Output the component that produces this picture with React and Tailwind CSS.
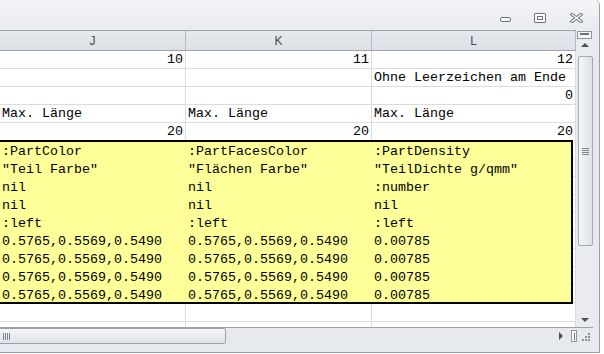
import React from 'react';

// column widths (incl. right gridline)
const COLS = ['w-[186px]', 'w-[186px]', 'w-[204px]'];

const topRows = [
  [{ t: '10', r: true }, { t: '11', r: true }, { t: '12', r: true }],
  [null, null, { t: 'Ohne Leerzeichen am Ende' }],
  [null, null, { t: '0', r: true }],
  [{ t: 'Max. Länge' }, { t: 'Max. Länge' }, { t: 'Max. Länge' }],
  [{ t: '20', r: true }, { t: '20', r: true }, { t: '20', r: true }],
];

const nums = '0.5765,0.5569,0.5490';
const yellowRows = [
  [':PartColor', ':PartFacesColor', ':PartDensity'],
  ['"Teil Farbe"', '"Flächen Farbe"', '"TeilDichte g/qmm"'],
  ['nil', 'nil', ':number'],
  ['nil', 'nil', 'nil'],
  [':left', ':left', ':left'],
  [nums, nums, '0.00785'],
  [nums, nums, '0.00785'],
  [nums, nums, '0.00785'],
  [nums, nums, '0.00785'],
];

const Cell = ({ cell, w }) => (
  <div
    className={`${w} h-full shrink-0 border-r border-[#dadcdd] flex items-center px-[2px] pt-[1px] whitespace-nowrap overflow-hidden ${
      cell && cell.r ? 'justify-end' : ''
    }`}
  >
    {cell ? cell.t : ''}
  </div>
);

const GridRow = ({ cells, h = 'h-[18px]', last = false }) => (
  <div className={`flex ${h} ${last ? '' : 'border-b'} border-[#dadcdd]`}>
    {COLS.map((w, i) => (
      <Cell key={i} cell={cells[i]} w={w} />
    ))}
  </div>
);

const WindowButtons = () => (
  <div className="flex items-start pt-[13px] pr-[16px] ml-auto">
    {/* minimize */}
    <div className="mt-[4px] w-[11px] h-[5px] rounded-[2px] border border-[#6f747b] bg-[#fbfbfc]" />
    {/* restore */}
    <div className="ml-[23px] w-[12px] h-[10px] rounded-[1px] border border-[#6f747b] bg-[#fbfbfc] flex items-center justify-center">
      <div className="w-[6px] h-[4px] border border-[#6f747b]" />
    </div>
    {/* close */}
    <svg className="ml-[24px]" width="13" height="10" viewBox="0 0 13 10">
      <path d="M2 1.5 L11 8.5 M11 1.5 L2 8.5" stroke="#70757c" strokeWidth="3.4" strokeLinecap="square" />
      <path d="M2 1.5 L11 8.5 M11 1.5 L2 8.5" stroke="#fbfbfc" strokeWidth="1.4" strokeLinecap="square" />
    </svg>
  </div>
);

const VScroll = () => (
  <div className="w-[17px] h-full bg-[#e9ebee] flex flex-col items-center">
    <div className="mt-[1px] w-[15px] h-[8px] border border-[#8f959d] bg-[#f6f7f9] flex justify-center pt-[1px]">
      <div className="w-[9px] h-[2px] border-y border-[#6f747b]" />
    </div>
    <div className="h-[12px] flex items-center justify-center">
      <div className="w-0 h-0 border-x-[4px] border-x-transparent border-b-[4px] border-b-[#4b5058]" />
    </div>
    <div className="mt-[5px] ml-[2px] w-[15px] h-[190px] rounded-[2px] border border-[#a3a9b1] bg-gradient-to-r from-[#f5f6f8] to-[#dde1e6] flex items-center justify-center">
      <div className="flex flex-col gap-[1px]">
        <div className="w-[7px] h-px bg-[#7d838a]" />
        <div className="w-[7px] h-px bg-[#7d838a]" />
        <div className="w-[7px] h-px bg-[#7d838a]" />
        <div className="w-[7px] h-px bg-[#7d838a]" />
      </div>
    </div>
    <div className="flex-1" />
    <div className="h-[14px] flex items-center justify-center">
      <div className="w-0 h-0 border-x-[4px] border-x-transparent border-t-[4px] border-t-[#4b5058]" />
    </div>
  </div>
);

const HScroll = () => (
  <div className="flex h-[16px]">
    <div className="w-[571px] h-full bg-[#e7e9ed] flex items-center">
      <div className="w-[226px] h-full rounded-r-[2px] border-y border-r border-[#9ba1a9] bg-gradient-to-b from-[#f4f5f7] to-[#dfe2e7] flex items-center pl-[3px] gap-[1px]">
        <div className="w-px h-[7px] bg-[#7d838a]" />
        <div className="w-px h-[7px] bg-[#7d838a]" />
        <div className="w-px h-[7px] bg-[#7d838a]" />
        <div className="w-px h-[7px] bg-[#7d838a]" />
      </div>
      <div className="flex-1" />
      <div className="mr-[8px] w-0 h-0 border-y-[4px] border-y-transparent border-l-[4px] border-l-[#4b5058]" />
    </div>
    <div className="w-[6px] h-full py-[2px] bg-[#e7e9ed]">
      <div className="w-[6px] h-full border border-[#8f959d] bg-[#f6f7f9] flex justify-center items-center">
        <div className="w-px h-[7px] bg-[#6f747b]" />
      </div>
    </div>
    <div className="w-[16px] h-full bg-[#e7e9ed] flex items-end justify-end pr-[3px] pb-[2px]">
      <svg width="10" height="10" viewBox="0 0 10 10">
        {[[8, 1], [5, 4], [8, 4], [2, 7], [5, 7], [8, 7]].map(([x, y], i) => (
          <rect key={i} x={x} y={y} width="2" height="2" fill="#8a9098" />
        ))}
      </svg>
    </div>
  </div>
);

export default function App() {
  return (
    <div className="w-[604px] h-[354px] bg-white overflow-hidden">
      <div className="w-[600px] h-[353px] bg-[#e6e9ed] border-r border-b border-[#9aa0a8] rounded-tr-[5px] flex flex-col">
        {/* title bar */}
        <div className="h-[30px] shrink-0 flex bg-gradient-to-b from-[#f3f4f6] to-[#e8ebef] rounded-tr-[5px]">
          <WindowButtons />
        </div>

        {/* grid + vertical scrollbar */}
        <div className="flex h-[297px] shrink-0">
          <div className="w-[576px] h-full bg-white text-black text-[13.33px] font-['Liberation_Mono',monospace] flex flex-col overflow-hidden">
            {/* column header */}
            <div className="flex h-[21px] shrink-0 border-y border-[#9da4ad] bg-gradient-to-b from-[#e5e8ec] to-[#dde1e6] text-[12px] text-[#4a4d52] font-['Liberation_Sans',sans-serif]">
              {['J', 'K', 'L'].map((c, i) => (
                <div key={c} className={`${COLS[i]} h-full flex items-center justify-center border-r border-[#b5bac1]`}>
                  {c}
                </div>
              ))}
            </div>

            {topRows.map((r, i) => (
              <GridRow key={i} cells={r} h={i === 4 ? 'h-[17px]' : 'h-[18px]'} last={i === 4} />
            ))}

            {/* highlighted block */}
            <div className="flex h-[164px] shrink-0">
              <div className="w-[573px] h-full border-y-2 border-r-2 border-black bg-[#ffff99] overflow-hidden">
                {yellowRows.map((r, i) => (
                  <div key={i} className="flex h-[18px]">
                    <div className="w-[186px] shrink-0 flex items-center pl-[2px] pt-[1px] whitespace-nowrap">{r[0]}</div>
                    <div className="w-[186px] shrink-0 flex items-center pl-[2px] pt-[1px] whitespace-nowrap">{r[1]}</div>
                    <div className="flex-1 flex items-center pl-[2px] pt-[1px] whitespace-nowrap">{r[2]}</div>
                  </div>
                ))}
              </div>
              <div className="w-[3px] h-full border-r border-[#dadcdd] flex flex-col">
                <div className="h-px" />
                {yellowRows.map((_, i) => (
                  <div key={i} className="h-[18px] shrink-0 border-b border-[#dadcdd]" />
                ))}
              </div>
            </div>

            <GridRow cells={[null, null, null]} />
            <GridRow cells={[null, null, null]} h="h-[5px]" last />
          </div>
          <VScroll />
          <div className="flex-1" />
        </div>

        {/* horizontal scrollbar */}
        <div className="border-t border-[#9ba1a9] w-[593px]">
          <HScroll />
        </div>
        <div className="flex-1" />
      </div>
    </div>
  );
}
